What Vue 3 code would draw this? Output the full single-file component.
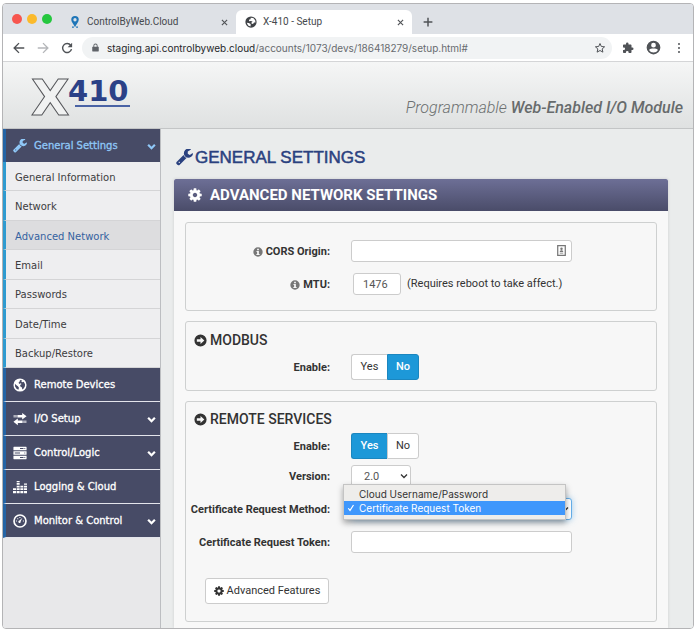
<script setup>
import { h, ref } from 'vue'

const wrench = 'M448 1472q0-26-19-45t-45-19-45 19-19 45 19 45 45 19 45-19 19-45zm644-420l-682 682q-37 37-90 37-52 0-91-37l-106-108q-38-36-38-90 0-53 38-91l681-681q39 98 114.5 173.5t173.5 114.5zm634-435q0 39-23 106-47 134-164.5 217.5t-258.5 83.5q-185 0-316.5-131.5t-131.5-316.5 131.5-316.5 316.5-131.5q58 0 121.5 16.5t107.5 46.5q16 11 16 28t-16 28l-293 169v224l193 107q5-3 79-48.5t135.5-81 70.5-35.5q15 0 23.5 10t8.5 25z'
const cog = 'M1152 896q0-106-75-181t-181-75-181 75-75 181 75 181 181 75 181-75 75-181zm512-109v222q0 12-8 23t-20 13l-185 28q-19 54-39 91 35 50 107 138 10 12 10 25t-9 23q-27 37-99 108t-94 71q-12 0-26-9l-138-108q-44 23-91 38-16 136-29 186-7 28-36 28h-222q-14 0-24.5-8.5t-11.5-21.5l-28-184q-49-16-90-37l-141 107q-10 9-25 9-14 0-25-11-126-114-165-168-7-10-7-23 0-12 8-23 15-21 51-66.5t54-70.5q-27-50-41-99l-183-27q-13-2-21-12.5t-8-23.5v-222q0-12 8-23t19-13l186-28q14-46 39-92-40-57-107-138-10-12-10-24 0-10 9-23 26-36 98.5-107.5t94.5-71.5q13 0 26 10l138 107q44-23 91-38 16-136 29-186 7-28 36-28h222q14 0 24.5 8.5t11.5 21.5l28 184q49 16 90 37l142-107q9-9 24-9 13 0 25 10 129 119 165 170 7 8 7 22 0 12-8 23-15 21-51 66.5t-54 70.5q26 50 41 98l183 28q13 2 21 12.5t8 23.5z'

// Each icon is [viewBox, fill-rule path, optional stroked path]
const icons = {
  wrench: ['64 170 1664 1664', wrench],
  cog: ['96 96 1600 1600', cog],
  globe: ['0 0 16 16', 'M8 .500a7.500 7.500 0 1 0 0 15A7.500 7.500 0 0 0 8 .500zM8 2.300L10.500 2.800 9.400 4 10.800 4.800 12.200 4.400 13.800 7 13.600 9.400 12.400 11.600 10.800 13 10 10.600 8.400 9.800 8.200 8 9.800 6.800 8.600 6 7 6.800 6.400 5.200 7.600 4zM2.200 6.600L3.600 8 5.600 9.400 6.800 11 6.200 13.400 4 12.200 2.400 9.800z'],
  globe2: ['0 0 16 16', 'M8 .500a7.500 7.500 0 1 0 0 15A7.500 7.500 0 0 0 8 .500zM2.300 9L5 9.200 7.600 10.800 7.400 13.900 4.200 12.800zM7.600 2.200L11 2.800 13.600 5.600 14 8.800 12 8.600 11 10.400 9 10.800 8.600 8.600 10.200 7.400 7.800 6.800 5.600 7 5.200 5 7.400 4.400z'],
  exchange: ['0 0 16 16', 'M10.500 1L15.500 4.800l-5 3.700V6.200H5V3.500h5.500zM.8 3.500h1v2.700h-1zM2.800 3.500h1.200v2.700H2.800zM5.500 7.500L.5 11.200l5 3.800v-2.500H11V9.800H5.500zM12 9.800h1.200v2.700H12zM14.200 9.800h1v2.700h-1z'],
  server: ['0 0 16 16', 'M1 .800h14a.5.5 0 0 1 .5.5v3.500H.5V1.300a.5.5 0 0 1 .5-.5zM.5 6h15v4H.5zM.5 11.200h15v3.500a.5.5 0 0 1-.5.5H1a.5.5 0 0 1-.5-.5zM8 2.300h4v1H8zM2 7.500h6v1H2zM8 12.700h4v1H8zM13 2.300h1v1h-1zM13 7.500h1v1h-1zM13 12.700h1v1h-1z'],
  bars: ['0 0 16 16', 'M0 12.500h3.400V15H0zM0 9.500h3.400v2H0zM4.200 12.500h3.400V15H4.200zM4.200 9.500h3.400v2H4.200zM4.200 6.500h3.400v2H4.200zM4.200 3.500h3.400v2H4.200zM4.200 1h3.400v1.500H4.200zM8.400 12.500h3.400V15H8.400zM8.400 9.500h3.400v2H8.400zM8.400 6.500h3.400v2H8.400zM12.600 12.500H16V15h-3.400zM12.600 9.500H16v2h-3.400zM12.600 6.500H16v2h-3.400zM12.600 4H16v1.500h-3.400z'],
  gauge: ['0 0 16 16', 'M8 .2a7.800 7.800 0 1 0 0 15.600A7.800 7.800 0 0 0 8 .2zM8 2.100a5.900 5.900 0 1 1 0 11.800A5.900 5.900 0 0 1 8 2.100zM10.800 4.200L7.300 7.500a1.400 1.400 0 1 0 1.500.9zM3.300 7.500h1.200v1.200H3.300zM4.800 4.800H6V6H4.800zM7.300 3.300h1.200v1.200H7.300zM11.300 7.500h1.200v1.200h-1.200z'],
  info: ['0 0 16 16', 'M8 .500a7.500 7.500 0 1 0 0 15A7.500 7.500 0 0 0 8 .500zM6.600 2.800h2.800v2.200H6.600zM5.600 6.300h3.800v4.700h1.200v1.800H5.400V11h1.200V8.100h-1z'],
  arrow: ['0 0 16 16', 'M8 .500a7.500 7.500 0 1 0 0 15A7.500 7.500 0 0 0 8 .500zM8 3.700L12.700 8 8 12.300V9.500H3.500v-3H8z'],
  lock: ['0 0 16 16', 'M3 6.500h1.200V4.800a3.800 3.800 0 0 1 7.600 0v1.700H13a.8.8 0 0 1 .8.8v7a.8.8 0 0 1-.8.8H3a.8.8 0 0 1-.8-.8v-7a.8.8 0 0 1 .8-.8zM5.800 6.500h4.400V4.800a2.200 2.200 0 0 0-4.400 0z'],
  puzzle: ['0 0 24 24', 'M20.500 11H19V7c0-1.100-.9-2-2-2h-4V3.500a2.500 2.500 0 0 0-5 0V5H4c-1.100 0-2 .9-2 2v3.800h1.500a2.700 2.700 0 0 1 0 5.400H2V20c0 1.100.9 2 2 2h3.800v-1.500a2.700 2.700 0 0 1 5.400 0V22H17c1.100 0 2-.9 2-2v-4h1.500a2.500 2.500 0 0 0 0-5z'],
  person: ['0 0 24 24', 'M12 1a11 11 0 1 0 0 22 11 11 0 0 0 0-22zM12 4.500a3.800 3.800 0 1 1 0 7.600 3.800 3.800 0 0 1 0-7.600zM4.800 16c1.500-1.800 4.200-2.300 7.200-2.300s5.700.5 7.200 2.300A8.400 8.400 0 0 1 12 20a8.400 8.400 0 0 1-7.200-4z'],
  dots: ['0 0 24 24', 'M12 2a2 2 0 1 0 0 4 2 2 0 0 0 0-4zM12 10a2 2 0 1 0 0 4 2 2 0 0 0 0-4zM12 18a2 2 0 1 0 0 4 2 2 0 0 0 0-4z'],
  pin: ['0 0 16 16', 'M8 0a5 5 0 0 0-5 5c0 3.500 3.500 6 5 10 1.500-4 5-6.500 5-10a5 5 0 0 0-5-5zM8 2.800a2.200 2.200 0 1 1 0 4.400 2.200 2.200 0 0 1 0-4.400zM4 14h2.500v1.500H4zM9.500 14H12v1.500H9.500z'],
  chevron: ['0 0 16 16', '', 'M2 5l6 6 6-6', 4],
  caret: ['0 0 16 16', '', 'M2 5l6 6 6-6', 2.6],
  back: ['0 0 16 16', '', 'M15 8H2M8 1.500L1.500 8 8 14.500', 1.8],
  forward: ['0 0 16 16', '', 'M1 8h13M8 1.500L14.500 8 8 14.500', 1.8],
  reload: ['0 0 16 16', 'M14.800 1v6H8.800z', 'M13 4.500A6 6 0 1 0 14 9.500', 1.9],
  close: ['0 0 16 16', '', 'M2 2l12 12M14 2L2 14', 2.6],
  plus: ['0 0 16 16', '', 'M8 1v14M1 8h14', 2.4],
  star: ['0 0 24 24', '', 'M12 3l2.700 6 6.500.6-4.900 4.300 1.500 6.400L12 17l-5.800 3.300 1.500-6.400L2.800 9.600l6.500-.6z', 2],
  check: ['0 0 16 16', '', 'M2.500 8.500L6 13l7-11', 2.4],
  card: ['0 0 16 16', 'M6.200 5.300a1.800 1.800 0 1 1 3.600 0 1.800 1.800 0 0 1-3.600 0zM5.500 10c0-3 5-3 5 0zM5.500 11.300h5v1h-5z', 'M2.500 1h11v14h-11z', 1.8]
}

const Icon = (props) => {
  const [viewBox, fill, stroke, width] = icons[props.name]
  return h('svg', { viewBox, 'aria-hidden': 'true' }, [
    fill ? h('path', { d: fill, fill: 'currentColor', 'fill-rule': 'evenodd' }) : null,
    stroke ? h('path', { d: stroke, fill: 'none', stroke: 'currentColor', 'stroke-width': width }) : null
  ])
}
Icon.props = ['name']

const subItems = ['General Information', 'Network', 'Advanced Network', 'Email', 'Passwords', 'Date/Time', 'Backup/Restore']
const sections = [
  { label: 'Remote Devices', icon: 'globe' },
  { label: 'I/O Setup', icon: 'exchange', open: true },
  { label: 'Control/Logic', icon: 'server', open: true },
  { label: 'Logging & Cloud', icon: 'bars' },
  { label: 'Monitor & Control', icon: 'gauge', open: true }
]

const active = ref('Advanced Network')
const cors = ref('')
const mtu = ref('1476')
const modbus = ref(false)
const remote = ref(true)
const version = ref('2.0')
const methods = ['Cloud Username/Password', 'Certificate Request Token']
const method = ref(methods[1])
const menuOpen = ref(true)
const token = ref('')

function pick(m) {
  method.value = m
  menuOpen.value = false
}
</script>

<template>
  <div class="desk">
    <div class="window">
      <div class="tabs">
        <div class="lights"><i class="red"></i><i class="amber"></i><i class="green"></i></div>
        <div class="tab">
          <Icon name="pin" class="fav blue" /><span>ControlByWeb.Cloud</span>
          <button class="plain" aria-label="Close tab"><Icon name="close" class="x" /></button>
        </div>
        <div class="tab current">
          <Icon name="globe2" class="fav" /><span>X-410 - Setup</span>
          <button class="plain" aria-label="Close tab"><Icon name="close" class="x" /></button>
        </div>
        <button class="plain new" aria-label="New tab"><Icon name="plus" /></button>
      </div>

      <div class="toolbar">
        <button class="plain" aria-label="Back"><Icon name="back" /></button>
        <button class="plain dim" aria-label="Forward"><Icon name="forward" /></button>
        <button class="plain" aria-label="Reload"><Icon name="reload" /></button>
        <div class="address">
          <Icon name="lock" class="lock" />
          <span class="url"><b>staging.api.controlbyweb.cloud</b>/accounts/1073/devs/186418279/setup.html#</span>
          <button class="plain" aria-label="Bookmark"><Icon name="star" class="star" /></button>
        </div>
        <button class="plain" aria-label="Extensions"><Icon name="puzzle" /></button>
        <button class="plain person" aria-label="Profile"><Icon name="person" /></button>
        <button class="plain" aria-label="Menu"><Icon name="dots" /></button>
      </div>

      <header class="banner">
        <svg class="logo" viewBox="0 0 110 66" role="img" aria-label="X410">
          <text class="logo-x" x="3" y="53">X</text>
          <text class="logo-n" x="40" y="39">410</text>
          <path d="M47 44h55" stroke="#4a63a5" stroke-width="2" />
        </svg>
        <p class="tagline">Programmable <b>Web-Enabled I/O Module</b></p>
      </header>

      <div class="body">
        <nav class="side">
          <a href="#" class="head on"><Icon name="wrench" class="ico" /><span>General Settings</span><Icon name="chevron" class="chev" /></a>
          <div class="subs">
            <a v-for="s in subItems" :key="s" href="#" :class="['sub', { active: s === active }]" @click.prevent="active = s">{{ s }}</a>
          </div>
          <a v-for="s in sections" :key="s.label" href="#" class="head">
            <Icon :name="s.icon" class="ico" /><span>{{ s.label }}</span><Icon v-if="s.open" name="chevron" class="chev" />
          </a>
        </nav>

        <main class="content">
          <h1><Icon name="wrench" class="h1-ico" />GENERAL SETTINGS</h1>
          <section class="panel">
            <h2><Icon name="cog" class="h2-ico" />ADVANCED NETWORK SETTINGS</h2>
            <div class="panel-body">
              <div class="box network">
                <div class="row">
                  <label for="cors"><Icon name="info" class="info" />CORS Origin:</label>
                  <div class="field wide"><input id="cors" v-model="cors" type="text" /><Icon name="card" class="card" /></div>
                </div>
                <div class="row">
                  <label for="mtu"><Icon name="info" class="info" />MTU:</label>
                  <div class="inline"><input id="mtu" v-model="mtu" class="short" type="text" /><span>(Requires reboot to take affect.)</span></div>
                </div>
              </div>

              <div class="box modbus">
                <h3><Icon name="arrow" class="h3-ico" />MODBUS</h3>
                <div class="row">
                  <span id="mb" class="label">Enable:</span>
                  <div class="toggle" role="group" aria-labelledby="mb">
                    <button :class="{ sel: modbus }" @click="modbus = true">Yes</button>
                    <button :class="{ sel: !modbus }" @click="modbus = false">No</button>
                  </div>
                </div>
              </div>

              <div class="box remote">
                <h3><Icon name="arrow" class="h3-ico" />REMOTE SERVICES</h3>
                <div class="row">
                  <span id="rs" class="label">Enable:</span>
                  <div class="toggle" role="group" aria-labelledby="rs">
                    <button :class="{ sel: remote }" @click="remote = true">Yes</button>
                    <button :class="{ sel: !remote }" @click="remote = false">No</button>
                  </div>
                </div>
                <div class="row version">
                  <label for="ver">Version:</label>
                  <div class="field ver">
                    <select id="ver" v-model="version"><option>1.0</option><option>2.0</option></select>
                    <Icon name="caret" class="caret" />
                  </div>
                </div>
                <div class="row gap">
                  <label for="method">Certificate Request Method:</label>
                  <div class="field wide">
                    <select id="method" v-model="method" class="focus"><option v-for="m in methods" :key="m">{{ m }}</option></select>
                    <Icon name="caret" class="caret" />
                    <ul v-if="menuOpen" class="menu" role="listbox" aria-label="Certificate Request Method">
                      <li v-for="m in methods" :key="m" role="option" :aria-selected="m === method" :class="{ picked: m === method }" @click="pick(m)">
                        <span class="tick"><Icon v-if="m === method" name="check" /></span>{{ m }}
                      </li>
                    </ul>
                  </div>
                </div>
                <div class="row gap">
                  <label for="token">Certificate Request Token:</label>
                  <div class="field wide"><input id="token" v-model="token" type="text" /></div>
                </div>
                <button class="advanced"><Icon name="cog" class="adv-ico" />Advanced Features</button>
              </div>
            </div>
          </section>
        </main>
      </div>
    </div>
  </div>
</template>

<style>
body {
  margin: 0;
  background: #fff;
}
</style>

<style scoped>
* {
  box-sizing: border-box;
}
.desk {
  min-height: 100vh;
  padding: 3px 2px 2px;
  display: flex;
  font-family: Roboto, "Liberation Sans", Helvetica, Arial, sans-serif;
  font-size: 11px;
  line-height: 16px;
  color: #333;
}
.window {
  flex: 1;
  min-width: 0;
  display: flex;
  flex-direction: column;
  border: 1px solid #b4b4b6;
  border-radius: 4px;
  overflow: hidden;
}
svg {
  display: block;
  flex: none;
}
button {
  font: inherit;
  color: inherit;
}
.plain {
  border: 0;
  padding: 0;
  background: none;
  color: #505357;
}
.plain svg {
  width: 12px;
  height: 12px;
}

/* browser chrome */
.tabs {
  display: flex;
  align-items: flex-end;
  height: 30px;
  background: #dee1e6;
  font-size: 10px;
}
.lights {
  display: flex;
  gap: 5px;
  padding: 0 13px 0 9px;
  align-self: center;
}
.lights i {
  width: 10px;
  height: 10px;
  border-radius: 50%;
}
.red { background: #f7564f; }
.amber { background: #fbba2c; }
.green { background: #25c73f; }
.tab {
  display: flex;
  align-items: center;
  width: 171px;
  height: 24px;
  padding: 0 8px 0 4px;
  color: #46494d;
}
.tab span {
  flex: 1;
}
.tab.current {
  width: 176px;
  padding-left: 9px;
  background: #fff;
  border-radius: 6px 6px 0 0;
}
.fav {
  width: 12px;
  height: 12px;
  margin-right: 6px;
  color: #3f4246;
}
.fav.blue {
  color: #1f76b8;
}
.plain .x {
  width: 7px;
  height: 7px;
}
.new {
  margin: 0 0 7px 11px;
}
.new svg {
  width: 10px;
  height: 10px;
}
.toolbar {
  display: flex;
  align-items: center;
  gap: 12px;
  height: 28px;
  padding: 0 8px 0 10px;
  background: #fff;
  border-bottom: 1px solid #d4d5d7;
}
.dim {
  color: #b5b7ba;
}
.address {
  flex: 1;
  display: flex;
  align-items: center;
  height: 22px;
  margin: 0 -2px 0 -3px;
  padding: 0 6px 0 9px;
  border-radius: 11px;
  background: #f1f3f4;
}
.lock {
  width: 9px;
  height: 9px;
  margin-right: 7px;
  color: #5f6368;
}
.url {
  flex: 1;
  font-family: Inter, Roboto, sans-serif;
  font-size: 10px;
  white-space: nowrap;
  color: #686b6f;
}
.url b {
  font-weight: 400;
  color: #26282b;
}
.person svg {
  width: 15px;
  height: 15px;
}

/* product banner */
.banner {
  display: flex;
  align-items: flex-end;
  justify-content: space-between;
  height: 67px;
  padding: 0 10px 0 25px;
  background: linear-gradient(#f5f6f6, #dfe1e1);
  border-bottom: 1px solid #c3c5c6;
}
.logo {
  width: 110px;
  height: 66px;
}
.logo text {
  font-family: "DejaVu Sans", Verdana, sans-serif;
  font-weight: 700;
}
.logo-x {
  font-size: 50px;
  fill: #f1f2f2;
  stroke: #55565a;
  stroke-width: 1px;
}
.logo-n {
  font-size: 29px;
  fill: #2b4187;
}
.tagline {
  margin: 0 0 12px;
  font-size: 16px;
  font-style: italic;
  font-weight: 300;
  color: #6c7070;
}
.tagline b {
  font-weight: 500;
  color: #676b6c;
}

/* side navigation */
.body {
  flex: 1;
  display: flex;
}
.side {
  flex: none;
  width: 158px;
  display: flex;
  flex-direction: column;
  background: #e8e8ea;
  border-right: 1px solid #bcbec1;
  font-family: "DejaVu Sans", Verdana, sans-serif;
  font-size: 10px;
}
.side a {
  display: flex;
  align-items: center;
  text-decoration: none;
}
.head {
  height: 34px;
  padding: 1px 4px 0 7px;
  border-left: 3px solid #2464a5;
  border-bottom: 1px solid #e4e5ec;
  background: #474b66;
  color: #fff;
  -webkit-text-stroke: 0.3px;
}
.head.on {
  height: 33px;
  border-bottom: 0;
  color: #8fc7f7;
}
.head span {
  flex: 1;
}
.ico {
  width: 14px;
  height: 14px;
  margin-right: 7px;
}
.chev {
  width: 9px;
  height: 9px;
}
.subs {
  display: grid;
  grid-auto-rows: 1fr;
  min-height: 206px;
}
.sub {
  padding: 3px 0 0 9px;
  border-left: 3px solid #2f9bd0;
  border-bottom: 1px solid #d4d4d6;
  background: #eeeef0;
  color: #3c3c3e;
}
.sub.active {
  background: #dddddf;
  color: #3562a0;
}

/* settings */
.content {
  flex: 1;
  min-width: 0;
  padding: 18px 25px 0 13px;
  display: flex;
  flex-direction: column;
  background: #eaecec;
}
h1,
h2,
h3 {
  display: flex;
  align-items: center;
  margin: 0;
}
h1 {
  margin-bottom: 11px;
  padding-left: 2px;
  font-family: "Liberation Sans", Helvetica, Arial, sans-serif;
  font-size: 17px;
  line-height: 21px;
  font-weight: 400;
  color: #2a417f;
  -webkit-text-stroke: 0.5px;
}
.h1-ico {
  width: 17px;
  height: 17px;
  margin-right: 2px;
}
.panel {
  flex: 1;
  background: #f8f8f8;
  box-shadow: 0 0 3px rgba(0, 0, 0, 0.12);
}
h2 {
  height: 32px;
  padding-left: 14px;
  background: linear-gradient(#6d6f96, #4a4c69);
  border-radius: 2px 2px 0 0;
  color: #fff;
  font-size: 15px;
  line-height: 20px;
  font-weight: 700;
}
.h2-ico {
  width: 14px;
  height: 14px;
  margin-right: 8px;
}
.panel-body {
  display: grid;
  gap: 10px;
  padding: 11px 11px 6px;
}
.box {
  border: 1px solid #ced0d0;
  border-radius: 3px;
  background: #f7f7f7;
}
.network {
  display: grid;
  gap: 11px;
  padding: 17px 0 15px;
}
.modbus {
  padding: 8px 0 10px;
}
.remote {
  padding: 7px 0 17px;
}
h3 {
  height: 20px;
  margin-bottom: 4px;
  padding-left: 8px;
  font-size: 14px;
  font-weight: 500;
}
.h3-ico {
  width: 13px;
  height: 13px;
  margin-right: 3px;
}
.row {
  display: grid;
  grid-template-columns: 144px minmax(0, 1fr);
  column-gap: 21px;
  align-items: center;
}
.row label,
.row .label {
  display: flex;
  justify-content: flex-end;
  align-items: center;
  padding-top: 2px;
  font-weight: 700;
  white-space: nowrap;
}
.info {
  width: 10px;
  height: 10px;
  margin-right: 3px;
  color: #777;
}
input,
select {
  width: 100%;
  height: 22px;
  margin: 0;
  padding: 0 8px;
  border: 1px solid #ccc;
  border-radius: 3px;
  background: #fff;
  color: #555;
  font-family: inherit;
  font-size: 11px;
  outline: 0;
  appearance: none;
}
select {
  padding-left: 12px;
}
.field {
  position: relative;
}
.wide {
  max-width: 221px;
}
.ver {
  width: 60px;
}
.card {
  position: absolute;
  right: 5px;
  top: 5px;
  width: 11px;
  height: 11px;
  color: #777;
}
.caret {
  position: absolute;
  right: 3px;
  top: 7px;
  width: 8px;
  height: 8px;
  color: #333;
}
.inline {
  display: flex;
  align-items: center;
  gap: 6px;
  padding-left: 2px;
  white-space: nowrap;
}
.short {
  width: 48px;
  padding: 0 9px;
}
.toggle {
  display: flex;
}
.toggle button {
  width: 32px;
  height: 26px;
  padding: 0;
  border: 1px solid #ccc;
  border-radius: 0 3px 3px 0;
  background: #fff;
}
.toggle button:first-child {
  width: 36px;
  border-right: 0;
  border-radius: 3px 0 0 3px;
}
.toggle button.sel {
  border-color: #1b86bf;
  background: #1d98d8;
  color: #fff;
  font-weight: 500;
}
.version {
  margin-top: 6px;
}
.gap {
  margin-top: 11px;
}
.focus {
  border-color: #66afe9;
  box-shadow: 0 0 6px rgba(102, 175, 233, 0.6);
}
.menu {
  position: absolute;
  left: -8px;
  right: 6px;
  top: -14px;
  margin: 0;
  padding: 2px 0 4px;
  list-style: none;
  border: 1px solid #c4c4c4;
  background: #eeedeb;
  box-shadow: 0 3px 6px rgba(0, 0, 0, 0.35);
  font-family: Inter, Roboto, sans-serif;
  font-size: 10px;
}
.menu li {
  display: flex;
  align-items: center;
  height: 14px;
  line-height: 14px;
  white-space: nowrap;
}
.menu .picked {
  background: #3f97fc;
  color: #fff;
}
.tick {
  width: 15px;
  padding-left: 3px;
}
.tick svg {
  width: 8px;
  height: 8px;
}
.advanced {
  display: flex;
  align-items: center;
  justify-content: center;
  width: 124px;
  height: 26px;
  margin: 25px 0 0 19px;
  padding: 0;
  border: 1px solid #ccc;
  border-radius: 3px;
  background: #fff;
}
.adv-ico {
  width: 10px;
  height: 10px;
  margin-right: 3px;
}
</style>
